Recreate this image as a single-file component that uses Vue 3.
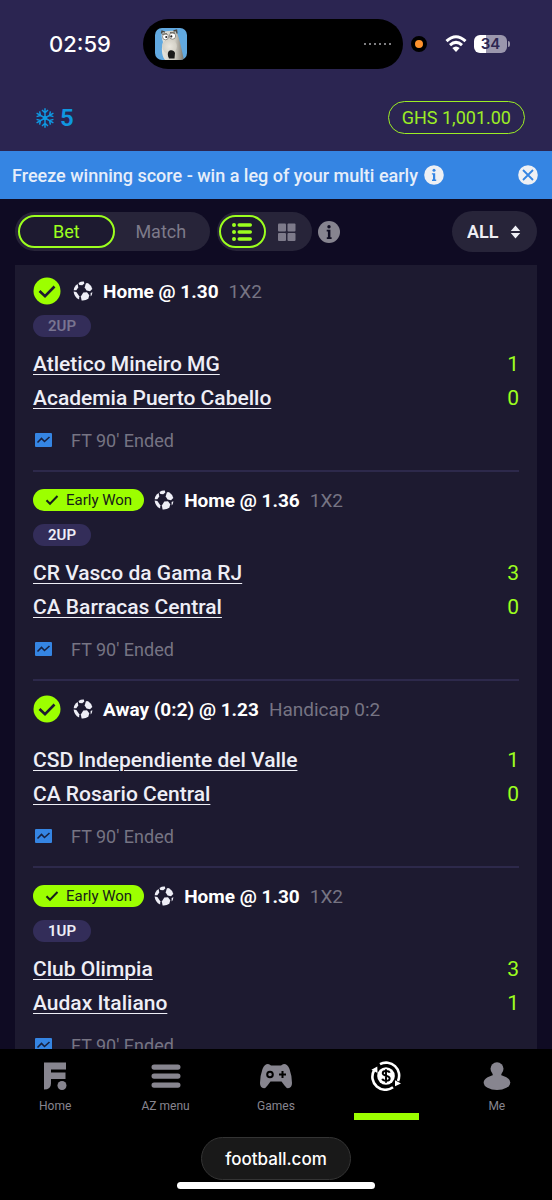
<script setup>
import { ref } from 'vue'

const mode = ref('Bet')
const view = ref('list')
const filter = ref('ALL')

const bets = [
  { early: false, pick: 'Home @ 1.30', market: '1X2', tag: '2UP', muted: true, teams: [['Atletico Mineiro MG', 1], ['Academia Puerto Cabello', 0]] },
  { early: true, pick: 'Home @ 1.36', market: '1X2', tag: '2UP', muted: false, teams: [['CR Vasco da Gama RJ', 3], ['CA Barracas Central', 0]] },
  { early: false, pick: 'Away (0:2) @ 1.23', market: 'Handicap 0:2', tag: '', muted: false, teams: [['CSD Independiente del Valle', 1], ['CA Rosario Central', 0]] },
  { early: true, pick: 'Home @ 1.30', market: '1X2', tag: '1UP', muted: false, teams: [['Club Olimpia', 3], ['Audax Italiano', 1]] }
]
</script>

<template>
  <div class="screen">
    <header class="top">
      <div class="status">
        <span class="clock">02:59</span>
        <div class="island">
          <svg class="avatar" viewBox="0 0 32 32" aria-hidden="true">
            <defs>
              <linearGradient id="fur" x1="0" x2="1"><stop offset="0" stop-color="#e4e3dc" /><stop offset=".6" stop-color="#cfccc2" /><stop offset="1" stop-color="#77736a" /></linearGradient>
              <radialGradient id="snout"><stop offset="0" stop-color="#e9e6dd" /><stop offset="1" stop-color="#d3d0c6" /></radialGradient>
              <clipPath id="tile"><rect width="32" height="32" rx="7" /></clipPath>
            </defs>
            <g clip-path="url(#tile)">
              <rect width="32" height="32" fill="#61a9e0" />
              <path d="M7 5Q9 3 14 3Q19 2 21.500 4C24.500 10 26.500 21 29 32H10C6 27 6.500 19 8 14C7 11 6 8 7 5Z" fill="url(#fur)" />
              <path d="M6.500 5.500L7 3.200L10 4.200M18.500 3L21.500 2.200L22 5.500" fill="none" stroke="#4b4740" stroke-width="1.400" />
              <ellipse cx="14.500" cy="18.500" rx="7.300" ry="7.500" fill="url(#snout)" />
              <circle cx="10.500" cy="8.800" r="3" fill="#fff" stroke="#77756e" stroke-width=".8" />
              <circle cx="17.500" cy="8" r="3.200" fill="#fff" stroke="#77756e" stroke-width=".8" />
              <circle cx="11.300" cy="9" r="1.100" fill="#222" />
              <circle cx="16.300" cy="8.400" r="1.100" fill="#222" />
              <path d="M7 6.200L12 5.800M15 4.600L20 5" stroke="#5d5951" stroke-width="1" />
              <path d="M13.500 23.500C15 21.500 19 21.500 20 25L19.500 30.500H14C12.500 28 12.500 25 13.500 23.500Z" fill="#191918" />
            </g>
          </svg>
          <span class="dots"><i v-for="n in 6" :key="n"></i></span>
        </div>
        <span class="mic"></span>
        <svg class="wifi" viewBox="0 0 22 18" aria-hidden="true">
          <g fill="none" stroke="#fff" stroke-width="3">
            <path d="M1.500 6.200Q11 -2.600 20.500 6.200" />
            <path d="M5 10.100Q11 4.600 17 10.100" />
          </g>
          <path d="M7.300 13Q11 9.800 14.700 13L11 17Z" fill="#fff" />
        </svg>
        <span class="battery"><span class="cell">34</span><i></i></span>
      </div>
      <div class="account">
        <span class="freezes">
          <svg viewBox="0 0 20 20" aria-hidden="true">
            <g fill="none" stroke="#0f97e0" stroke-width="1.500">
              <g v-for="a in 6" :key="a" :transform="`rotate(${a * 60} 10 10)`">
                <path d="M10 10V.3M7 2L10 4.800L13 2" />
              </g>
            </g>
            <circle cx="10" cy="10" r="2.200" fill="#0f97e0" />
          </svg>
          5
        </span>
        <button class="balance">GHS 1,001.00</button>
      </div>
    </header>

    <div class="banner">
      <span>Freeze winning score - win a leg of your multi early</span>
      <button aria-label="About freeze">
        <svg viewBox="0 0 20 20"><circle cx="10" cy="10" r="9.800" fill="#eef0f4" /><circle cx="10" cy="5.300" r="1.500" fill="#3585e3" /><path d="M7.900 8.200H11.200V14.500H12.200V16H8V14.500H9V9.600H7.900Z" fill="#3585e3" /></svg>
      </button>
      <button class="close" aria-label="Close">
        <svg viewBox="0 0 20 20"><circle cx="10" cy="10" r="9.800" fill="#eef0f4" /><path d="M5 5L15 15M15 5L5 15" stroke="#3585e3" stroke-width="1.800" /></svg>
      </button>
    </div>

    <div class="toolbar">
      <div class="group modes">
        <button v-for="m in ['Bet', 'Match']" :key="m" :class="{ on: mode === m }" :aria-pressed="mode === m" @click="mode = m">{{ m }}</button>
      </div>
      <div class="group views">
        <button :class="{ on: view === 'list' }" aria-label="List view" @click="view = 'list'">
          <svg viewBox="0 0 22 20"><g fill="currentColor"><g v-for="y in [3, 10, 17]" :key="y"><circle cx="3" :cy="y" r="2" /><rect x="6.500" :y="y - 1.700" width="14.500" height="3.400" rx="1.700" /></g></g></svg>
        </button>
        <button :class="{ on: view === 'grid' }" aria-label="Grid view" @click="view = 'grid'">
          <svg viewBox="0 0 22 20"><g fill="currentColor"><rect x="2" y="1.500" width="8" height="8" rx="1" /><rect x="11.500" y="1.500" width="8" height="8" rx="1" /><rect x="2" y="11" width="8" height="8" rx="1" /><rect x="11.500" y="11" width="8" height="8" rx="1" /></g></svg>
        </button>
      </div>
      <button class="help" aria-label="Information">
        <svg viewBox="0 0 22 22"><circle cx="11" cy="11" r="11" fill="#86848f" /><circle cx="11" cy="5.800" r="1.700" fill="#0f0d21" /><path d="M8.700 8.700H12.400V16.200H13.600V18H8.800V16.200H9.900V10.400H8.700Z" fill="#0f0d21" /></svg>
      </button>
      <div class="filter">
        <select v-model="filter" aria-label="Filter bets"><option>ALL</option></select>
        <svg viewBox="0 0 10 14" aria-hidden="true"><path d="M5 0.500L9.700 6H.3ZM5 13.500L.3 8H9.700Z" fill="#eeeef4" /></svg>
      </div>
    </div>

    <main class="list">
      <article v-for="(b, i) in bets" :key="i" class="bet">
        <div class="head">
          <span v-if="b.early" class="early">
            <svg viewBox="0 0 14 12" aria-hidden="true"><path d="M1.500 6.200L5 9.800L12.500 2" fill="none" stroke="#15201a" stroke-width="2" /></svg>
            Early Won
          </span>
          <svg v-else class="won" viewBox="0 0 28 28" aria-label="Won"><circle cx="14" cy="14" r="13.500" fill="#9cff00" /><path d="M6.500 14L12 19.200L21.500 9.500" fill="none" stroke="#1d1a30" stroke-width="2.600" /></svg>
          <svg class="ball" viewBox="0 0 20 20" aria-hidden="true">
            <g fill="#eeeef6">
              <path d="M5.500 2Q8 .4 10.800.6L11.300 2.400L9.300 4.200L6.300 4Z" />
              <path d="M12.800 2.400Q14 1.600 15.500 2.500Q18.600 4.500 19.300 8L17 10.200L13.600 9.600L11.700 6.500Z" />
              <path d="M4.600 3L5.300 6.500L3.300 9.300L.7 9.200Q1 5.200 4.600 3Z" />
              <path d="M.6 10.600L3.400 10.900L6.300 15.200L6.100 18.600Q1.200 16.300.6 10.600Z" />
              <path d="M10.300 11.500L14 11.300L16.300 14.300L15.300 17.800Q12.300 19.800 8.600 19.400L7.800 15.500Z" />
              <path d="M17.600 12L19.400 11.300Q19.200 14 17.700 15.600Z" />
            </g>
          </svg>
          <strong>{{ b.pick }}</strong>
          <span class="market">{{ b.market }}</span>
        </div>
        <div class="tags"><span v-if="b.tag" class="tag" :class="{ muted: b.muted }">{{ b.tag }}</span></div>
        <div v-for="t in b.teams" :key="t[0]" class="team"><a href="#">{{ t[0] }}</a><span>{{ t[1] }}</span></div>
        <div class="result">
          <svg viewBox="0 0 17 14" aria-hidden="true"><rect width="17" height="14" rx="1" fill="#3585e3" /><path d="M2.500 9.500L6.500 5.500L9.500 8.500L14.500 4" fill="none" stroke="#17203f" stroke-width="1.600" /></svg>
          FT 90' Ended
        </div>
      </article>
    </main>

    <footer>
      <nav>
        <a href="#">
          <svg viewBox="0 0 30 30"><g fill="#87858f"><path d="M4 1.500H26V8.500H11V11.500H25.500V18H11V22.500Q11 28.500 4 28.500Z" /><circle cx="22" cy="24.500" r="4.500" /></g></svg>
          <span>Home</span>
        </a>
        <a href="#">
          <svg viewBox="0 0 30 30"><g fill="#87858f"><rect x=".5" y="3.500" width="29" height="5.200" rx="2.600" /><rect x=".5" y="12.500" width="29" height="5.200" rx="2.600" /><rect x=".5" y="21.500" width="29" height="5.200" rx="2.600" /></g></svg>
          <span>AZ menu</span>
        </a>
        <a href="#">
          <svg class="pad" viewBox="0 0 34 30">
            <path d="M9 3Q10.500 3 12 4.500H22Q23.500 3 25 3Q28.500 3 30.500 8Q33 15 33 22Q33 27 29 27.300Q27.500 27.300 25.500 24.500L22.500 20.500H11.500L8.500 24.500Q6.500 27.300 5 27.300Q1 27 1 22Q1 15 3.500 8Q5.500 3 9 3Z" fill="#87858f" />
            <circle cx="11" cy="13.500" r="2.800" fill="none" stroke="#000" stroke-width="2" /><path d="M23.500 10V17M20 13.500H27" stroke="#000" stroke-width="2" />
          </svg>
          <span>Games</span>
        </a>
        <a href="#" class="active" aria-label="Bets">
          <svg viewBox="0 0 30 30">
            <g fill="none" stroke="#fff" stroke-width="2.600">
              <path d="M9 3.200A13 13 0 0 1 27 20" /><path d="M22 26.300A13 13 0 0 1 3 9.500" />
            </g>
            <path d="M.4 8.800L6.300 5.500L6.500 12ZM24 19.300L30 22.600L24 25.200Z" fill="#fff" />
            <circle cx="15" cy="15" r="8.800" fill="#fff" />
            <path d="M18.700 11.800C18 9.500 11.700 9.200 11.700 12.300C11.700 15.500 18.700 14 18.700 17.500C18.700 20.700 12 20.500 11.300 17.800M15 8.300V21.700" fill="none" stroke="#000" stroke-width="1.900" />
          </svg>
        </a>
        <a href="#">
          <svg viewBox="0 0 30 30"><g fill="#87858f"><circle cx="15" cy="7.800" r="6.500" /><path d="M11 11H19L19.500 15H10.500Z" /><ellipse cx="15" cy="21.500" rx="13.300" ry="7.600" /></g></svg>
          <span>Me</span>
        </a>
      </nav>
      <button class="address">football.com</button>
      <div class="grip"></div>
    </footer>
  </div>
</template>

<style>
body { background: #000; }
</style>

<style scoped>
* { box-sizing: border-box; }
.screen { display: flex; flex-direction: column; height: 100vh; overflow: hidden; background: #0f0b23; color: #fff; font-family: Roboto, "Liberation Sans", sans-serif; }
button { padding: 0; border: 0; background: none; color: inherit; font: inherit; }
svg { display: block; flex: none; }
a { color: inherit; }

.top { flex: none; background: #2b2551; }
.status { display: flex; align-items: center; padding: 19px 42px 0 49px; }
.clock { width: 62px; margin-right: 32px; font: 500 22px/28px Inter, sans-serif; }
.island { flex: 1; display: flex; align-items: center; justify-content: space-between; height: 50px; padding: 0 12px; border-radius: 25px; background: #000; }
.avatar { width: 32px; height: 32px; }
.dots { display: flex; gap: 3px; }
.dots i { width: 2px; height: 2px; border-radius: 50%; background: #a9a9ad; }
.mic { width: 16px; height: 16px; margin: 0 18px 0 8px; border: 4px solid #000; border-radius: 50%; background: #ff922d; }
.wifi { width: 22px; height: 18px; }
.battery { display: flex; align-items: center; gap: 1px; margin-left: 7px; }
.cell { width: 33px; height: 18px; border-radius: 6px; background: linear-gradient(90deg, #fff 35%, #9b97ad 35%); color: #2b2551; font: 600 15px/18px Inter, sans-serif; text-align: center; }
.battery i { width: 2px; height: 6px; border-radius: 0 2px 2px 0; background: #9b97ad; }
.account { display: flex; align-items: center; justify-content: space-between; padding: 32px 27px 17px 35px; }
.freezes { display: flex; align-items: center; gap: 5px; color: #0f97e0; font-size: 24px; font-weight: 600; line-height: 28px; }
.freezes svg { width: 20px; height: 20px; }
.balance { height: 33px; padding: 0 13px; border: 1px solid #9ced25; border-radius: 17px; color: #9ced25; font-size: 18px; }

.banner { flex: none; display: flex; align-items: center; gap: 6px; height: 48px; padding: 0 14px 0 12px; background: #3585e3; color: #e6eefa; font-size: 18px; font-weight: 500; }
.banner svg { width: 20px; height: 20px; }
.close { margin-left: auto; }

.toolbar { flex: none; display: flex; align-items: center; padding: 12px 15px 13px; }
.group { display: flex; height: 39px; padding: 3px; border-radius: 20px; background: #272439; color: #7d7a8a; }
.group button { display: flex; flex: 1 1 0; align-items: center; justify-content: center; border-radius: 17px; }
.group .on { border: 2px solid #9cff1e; background: #1d1a30; color: #9cff1e; }
.modes { width: 195px; font-size: 18px; }
.views { width: 95px; margin: 0 6px 0 7px; padding: 3px 4px 3px 2px; }
.views svg { width: 22px; height: 20px; }
.help svg { width: 22px; height: 22px; }
.filter { position: relative; display: flex; align-items: center; margin-left: auto; }
.filter select { appearance: none; height: 41px; width: 85px; padding: 0 15px; border: 0; border-radius: 21px; background: #272439; color: #eeeef4; font: 600 18px Roboto, sans-serif; }
.filter svg { position: absolute; right: 16px; width: 11px; height: 14px; pointer-events: none; }

.list { flex: 1; min-height: 0; overflow: hidden; margin: 0 15px; padding: 0 18px; background: #1d1a30; }
.bet { padding: 13px 0; border-bottom: 2px solid #2d294b; }
.bet:first-child { padding-top: 11px; }
.head { display: flex; align-items: center; height: 30px; font-size: 19px; white-space: nowrap; }
.won { width: 28px; height: 28px; }
.early { display: flex; align-items: center; gap: 7px; height: 22px; padding: 0 12px; border-radius: 11px; background: #9cff00; color: #15201a; font-size: 15px; }
.early svg { width: 14px; height: 12px; }
.ball { width: 20px; height: 20px; margin: 0 10px 0 12px; }
.early + .ball { margin-left: 10px; }
.head strong { font-weight: 700; }
.market { margin-left: 10px; color: #767483; }
.tags { display: flex; padding: 9px 0 10px; }
.tag { width: 58px; height: 22px; border-radius: 11px; background: #332d59; color: #eeeef6; font-size: 15px; font-weight: 600; line-height: 22px; text-align: center; }
.muted { color: #797591; }
.team { display: flex; justify-content: space-between; color: #eeeef6; font-size: 21px; line-height: 34px; }
.team a { font-weight: 500; text-decoration-thickness: 1px; text-underline-offset: 3px; }
.team span { color: #9cff1e; }
.result { display: flex; align-items: center; gap: 19px; height: 34px; margin-top: 8px; padding-left: 2px; color: #767483; font-size: 18px; }
.result svg { width: 17px; height: 14px; }

footer { flex: none; display: flex; flex-direction: column; align-items: center; background: #000; }
nav { display: grid; grid-template-columns: repeat(5, 1fr); width: 100%; height: 71px; }
nav a { display: flex; flex-direction: column; align-items: center; gap: 6px; padding-top: 12px; color: #87858f; font-size: 12px; line-height: 18px; text-decoration: none; }
nav svg { width: 30px; height: 30px; }
nav .pad { width: 34px; }
.active { justify-content: space-between; }
.active::after { content: ""; width: 65px; height: 7px; background: #9cff00; }
.address { height: 43px; margin-top: 17px; padding: 0 23px; border: 1px solid #343434; border-radius: 22px; background: #191919; font: 500 17px Inter, sans-serif; }
.grip { width: 198px; height: 7px; margin: 2px 0 11px; border-radius: 4px; background: #fff; }
</style>
